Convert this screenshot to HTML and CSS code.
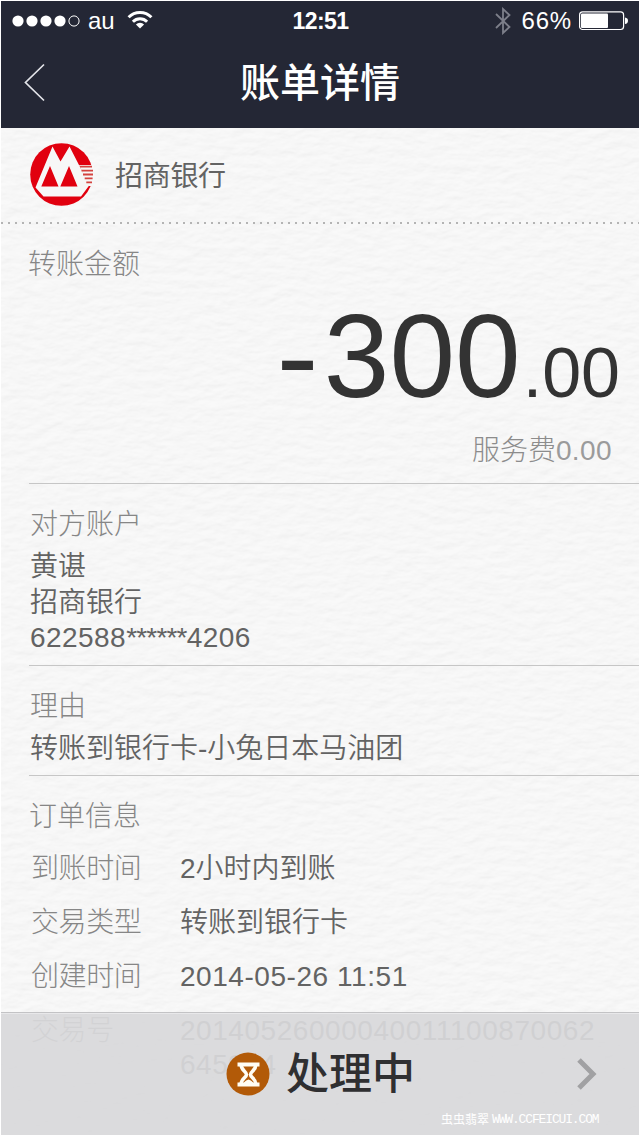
FILE: index.html
```html
<!DOCTYPE html>
<html lang="zh-CN">
<head>
<meta charset="utf-8">
<title>账单详情</title>
<link rel="stylesheet" href="styles.css">
</head>
<body>
<div class="screen">
  <header class="top">
    <div class="status">
      <div class="status-left">
        <svg class="signal" width="68" height="12" viewBox="0 0 68 12"><g fill="#fff"><circle cx="6" cy="6" r="5.6"/><circle cx="20" cy="6" r="5.6"/><circle cx="34" cy="6" r="5.6"/><circle cx="48" cy="6" r="5.6"/></g><circle cx="62" cy="6" r="5.1" fill="none" stroke="#fff" stroke-width="1"/></svg>
        <span class="carrier">au</span>
        <svg class="wifi" width="26" height="20" viewBox="0 0 26 20"><g fill="none" stroke="#fff" stroke-width="3"><path d="M1.6 7.2 A16 16 0 0 1 24.4 7.2"/><path d="M5.9 11.8 A10 10 0 0 1 20.1 11.8"/></g><path d="M13 18.6 L8.9 14.4 A5.8 5.8 0 0 1 17.1 14.4 Z" fill="#fff"/></svg>
      </div>
      <span class="clock">12:51</span>
      <div class="status-right">
        <svg width="16" height="28" viewBox="0 0 16 28"><path d="M1 7 L14.5 20 L8 26 V2 L14.5 8 L1 21" fill="none" stroke="#7d7f8a" stroke-width="1.8"/></svg>
        <span class="percent">66%</span>
        <svg width="50" height="20" viewBox="0 0 50 20"><rect x=".6" y=".9" width="44" height="17.6" rx="3" fill="none" stroke="#fff" stroke-width="1.2"/><rect x="2" y="2.4" width="27" height="14.7" rx="1" fill="#fff"/><path d="M46 6.5 Q49 7 49 9.7 Q49 12.5 46 13 Z" fill="#fff"/></svg>
      </div>
    </div>
    <div class="nav">
      <svg class="back" width="24" height="40" viewBox="0 0 24 40"><path d="M21 1.5 L2.5 19.5 L21 37.5" fill="none" stroke="#e4e5ea" stroke-width="1.7"/></svg>
      <h1>账单详情</h1>
    </div>
  </header>

  <main class="paper">
    <svg class="texture" width="638" height="1007">
      <filter id="grain" x="0" y="0" width="100%" height="100%" color-interpolation-filters="sRGB">
        <feTurbulence type="fractalNoise" baseFrequency=".06 .12" numOctaves="3" seed="8"/>
        <feDiffuseLighting surfaceScale=".5" diffuseConstant="1.06" lighting-color="#fff"><feDistantLight azimuth="250" elevation="66"/></feDiffuseLighting>
      </filter>
      <rect width="638" height="1007" filter="url(#grain)" opacity=".32"/>
    </svg>
    <section class="bank">
      <svg width="64" height="64" viewBox="0 0 64 64">
        <circle cx="31.5" cy="31.5" r="31.3" fill="#e1000f"/>
        <path d="M60.5 22 H64 V43 H59 L49 22 Z" fill="#f7f7f7"/>
        <path d="M22.5 3.5 L30.5 18.5 L39.5 3.5 L50 24 L59.5 42 L51 53.5 H13.5 L5.5 44.5 Z" fill="#f7f7f7"/>
        <path d="M20 23 L28.5 43.5 H11.3 Z M39 23 L47.5 43.5 H30.3 Z" fill="#e1000f"/>
        <path d="M50 23.7 H62 M51.5 27.6 H63 M53 31.5 H63 M54.7 35.4 H62.6 M56.3 39.3 H62" stroke="#d4433f" stroke-width="1.8"/>
      </svg>
      <span>招商银行</span>
    </section>
    <div class="perforation"></div>
    <section class="money">
      <h2>转账金额</h2>
      <div class="amount"><span class="sign">-</span>300<span class="cents">.00</span></div>
      <div class="fee">服务费<span class="num">0.00</span></div>
    </section>
    <section class="payee">
      <h2>对方账户</h2>
      <p>黄谌</p>
      <p>招商银行</p>
      <p class="num">622588<span class="mask">******</span>4206</p>
    </section>
    <section class="reason">
      <h2>理由</h2>
      <p>转账到银行卡-小兔日本马油团</p>
    </section>
    <section class="order">
      <h2>订单信息</h2>
      <dl>
        <dt>到账时间</dt><dd>2小时内到账</dd>
        <dt>交易类型</dt><dd>转账到银行卡</dd>
        <dt>创建时间</dt><dd class="num">2014-05-26 11:51</dd>
        <dt>交易号</dt><dd class="num">20140526000040011100870062<br>645944</dd>
      </dl>
    </section>
  </main>

  <footer class="bar">
    <svg width="44" height="44" viewBox="0 0 44 44"><circle cx="22" cy="22" r="21.5" fill="#b25a08"/><path d="M11.5 12.5 H33.5 M11.5 32.5 H33.5" stroke="#fffdf4" stroke-width="4.2"/><path d="M15.2 13 C15.2 18.5 20.5 19.5 20.5 22.5 C20.5 25.5 15.2 26.5 15.2 32 M29.8 13 C29.8 18.5 24.5 19.5 24.5 22.5 C24.5 25.5 29.8 26.5 29.8 32" fill="none" stroke="#fffdf4" stroke-width="3.6"/><path d="M17.5 31 C19.5 28.5 21 28 22.5 27.5 C24 28 25.5 28.5 27.5 31 Z" fill="#fffdf4"/></svg>
    <strong>处理中</strong>
    <svg class="go" width="22" height="34" viewBox="0 0 22 34"><path d="M3 3 L17 17 L3 31" fill="none" stroke="#a1a1a3" stroke-width="5"/></svg>
    <div class="watermark"><span>虫虫翡翠</span><span class="site">WWW.CCFEICUI.COM</span></div>
  </footer>
</div>
</body>
</html>
```

FILE: styles.css
```css
* { box-sizing: border-box; margin: 0; padding: 0; }
body {
  font-family: "Liberation Sans", "Noto Sans CJK SC DemiLight", "Noto Sans CJK SC", sans-serif;
  font-size: 28px;
  line-height: 36px;
  color: #636363;
  background: #fff;
}
svg { display: block; flex: none; }
.screen {
  position: relative;
  width: 640px;
  height: 1136px;
  padding: 1px;
  overflow: hidden;
}
h1, .bank, .bar { font-family: "Liberation Sans", "Noto Sans CJK SC", sans-serif; }
h2, dt, .fee { font-family: "Liberation Sans", "Noto Sans CJK SC Light", "Noto Sans CJK SC", sans-serif; }

.top { height: 127px; background: #242735; color: #fff; }
.status {
  display: grid;
  grid-template-columns: 1fr auto 1fr;
  align-items: center;
  height: 40px;
  padding: 0 10px 0 11px;
}
.status-left, .status-right { display: flex; align-items: center; height: 40px; }
.status-right { justify-content: flex-end; }
.carrier { margin: 0 12px 0 8px; font-size: 24px; }
.wifi { margin-top: -2px; }
.clock { font-size: 23px; font-weight: bold; letter-spacing: -.6px; }
.percent { margin: 0 7px 0 11px; font-size: 24px; letter-spacing: .8px; }
.nav {
  display: grid;
  grid-template-columns: 60px 1fr 60px;
  align-items: center;
  height: 84px;
}
.back { margin-left: 22px; }
h1 { text-align: center; font-size: 40px; font-weight: 500; line-height: 60px; }

.paper { position: relative; height: 1007px; background: #f7f7f7; overflow: hidden; }
.texture { position: absolute; top: 0; left: 0; }
.paper > section, .perforation { position: relative; }
.bank {
  display: flex;
  align-items: center;
  gap: 21px;
  height: 94px;
  padding-left: 29px;
}
.bank span { margin-top: 4px; letter-spacing: -.3px; }
.perforation {
  height: 2px;
  background: repeating-linear-gradient(90deg, #b4b4b4 0 2px, transparent 2px 7px);
}
h2, dt { font-size: 28px; font-weight: 300; color: #868686; }

.money, .payee, .reason { margin-left: 28px; border-bottom: 1px solid #c6c6c6; }
.money { height: 260px; padding-top: 23px; }
.money h2 { margin-left: -1px; }
.amount {
  display: flex;
  justify-content: flex-end;
  align-items: baseline;
  height: 118px;
  margin-top: 14px;
  padding-right: 19px;
  font-size: 118px;
  line-height: 118px;
  color: #333;
}
.sign { margin-right: 7px; transform: scaleX(1.07); }
.cents { margin-left: 2px; font-size: 70px; }
.fee { margin-top: 18px; padding-right: 27px; text-align: right; font-weight: 300; color: #8c8c8c; }
.fee .num { letter-spacing: .4px; color: #9b9b9b; }
.num { letter-spacing: .55px; }
.mask { letter-spacing: -.8px; }
.payee { height: 182px; padding: 23px 0 0 1px; }
.payee h2, .reason h2 { margin-bottom: 6px; }
.payee .num { margin-top: -1px; letter-spacing: .45px; }
.payee .mask { letter-spacing: -.8px; }
.reason { height: 110px; padding: 23px 0 0 1px; }
.order { padding: 23px 0 0 28px; }
dl {
  display: grid;
  grid-template-columns: 149px 1fr;
  row-gap: 20px;
  margin-top: 17px;
  padding-left: 2px;
  line-height: 34px;
}
dt { letter-spacing: -.4px; }

/* Translucent status bar floating over the scrolled details */
.bar {
  position: absolute;
  left: 1px;
  right: 1px;
  bottom: 1px;
  display: flex;
  align-items: center;
  height: 123px;
  padding-left: 225px;
  border-top: 1px solid #c3c3c5;
  box-shadow: inset 0 1px #e8e8ea;
  background: rgba(216, 216, 218, .93);
}
.bar strong { margin-left: 16px; font-size: 43px; font-weight: 500; line-height: 60px; color: #2f2f31; }
.go { margin: 0 41px 0 auto; }
.watermark {
  position: absolute;
  left: 440px;
  bottom: 6px;
  display: flex;
  gap: 3px;
  font-size: 12px;
  line-height: 18px;
  color: #fff;
}
.site { font-family: "Liberation Mono", monospace; font-size: 13px; letter-spacing: -1.15px; }
```
